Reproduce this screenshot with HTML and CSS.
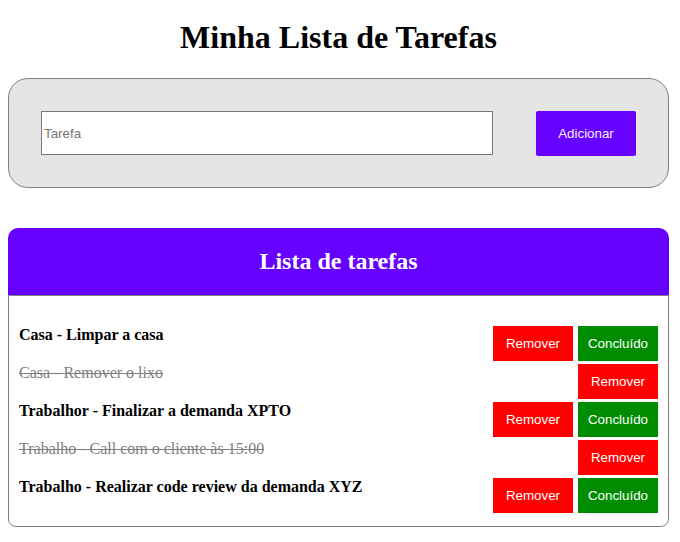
FILE: index.html
```html
<!DOCTYPE html>
<html lang="pt">
<head>
<meta charset="utf-8">
<title>Minha Lista de Tarefas</title>
<link rel="stylesheet" href="styles.css">
</head>
<body>
<main class="page">
  <h1 class="title">Minha Lista de Tarefas</h1>
  <form class="add-form">
    <input class="task-input" type="text" placeholder="Tarefa">
    <button class="add-btn" type="button">Adicionar</button>
  </form>
  <section class="list-card">
    <h2 class="list-header">Lista de tarefas</h2>
    <ul class="list-body">
      <li class="task">
        <span class="task-text">Casa - Limpar a casa</span>
        <div class="actions"><button class="btn btn-remove">Remover</button><button class="btn btn-done">Concluído</button></div>
      </li>
      <li class="task done">
        <span class="task-text">Casa - Remover o lixo</span>
        <div class="actions"><button class="btn btn-remove">Remover</button></div>
      </li>
      <li class="task">
        <span class="task-text">Trabalhor - Finalizar a demanda XPTO</span>
        <div class="actions"><button class="btn btn-remove">Remover</button><button class="btn btn-done">Concluído</button></div>
      </li>
      <li class="task done">
        <span class="task-text">Trabalho - Call com o cliente às 15:00</span>
        <div class="actions"><button class="btn btn-remove">Remover</button></div>
      </li>
      <li class="task">
        <span class="task-text">Trabalho - Realizar code review da demanda XYZ</span>
        <div class="actions"><button class="btn btn-remove">Remover</button><button class="btn btn-done">Concluído</button></div>
      </li>
    </ul>
  </section>
</main>
</body>
</html>
```
FILE: styles.css
```css
html, body {
  margin: 0;
  padding: 0;
  background: #ffffff;
}
body {
  font-family: "Liberation Serif", "Times New Roman", serif;
  color: #000;
}
.page {
  width: 661px;
  margin-left: 8px;
  padding-top: 1px;
}
.title {
  margin: 18px 0 0;
  height: 41px;
  font-size: 32px;
  font-weight: bold;
  text-align: center;
  line-height: 37px;
}
.add-form {
  margin-top: 18px;
  height: 110px;
  box-sizing: border-box;
  padding: 32px;
  border: 1px solid #808080;
  border-radius: 20px;
  background: #e5e5e5;
  display: flex;
  align-items: flex-start;
  gap: 43px;
}
.task-input {
  flex: 1;
  height: 44px;
  box-sizing: border-box;
  margin: 0;
  border: 1px solid #767676;
  padding: 0 2px;
  font-family: "Liberation Sans", Arial, sans-serif;
  font-size: 13.33px;
  background: #fff;
  outline: none;
}
.task-input::placeholder {
  color: #757575;
}
.add-btn {
  width: 100px;
  height: 45px;
  margin: 0;
  border: none;
  border-radius: 2px;
  background: #6600ff;
  color: #f4eeff;
  font-family: "Liberation Sans", Arial, sans-serif;
  font-size: 13.33px;
}
.list-card {
  margin-top: 40px;
}
.list-header {
  margin: 0;
  height: 67px;
  background: #6600ff;
  color: #fff;
  border-radius: 10px 10px 0 0;
  font-size: 24px;
  font-weight: bold;
  text-align: center;
  line-height: 66px;
}
.list-body {
  list-style: none;
  margin: 0;
  padding: 30px 10px 13px;
  border: 1px solid #808080;
  border-radius: 0 0 8px 8px;
  display: flex;
  flex-direction: column;
  gap: 3px;
}
.task {
  display: flex;
  justify-content: space-between;
  align-items: flex-start;
  height: 35px;
}
.task-text {
  font-size: 16px;
  font-weight: bold;
  line-height: 18px;
}
.done .task-text {
  font-weight: normal;
  color: #808080;
  text-decoration: line-through;
}
.actions {
  display: flex;
  gap: 5px;
}
.btn {
  width: 80px;
  height: 35px;
  margin: 0;
  border: none;
  color: #fff;
  font-family: "Liberation Sans", Arial, sans-serif;
  font-size: 13.33px;
  padding: 0;
}
.btn-remove {
  background: #ff0000;
}
.btn-done {
  background: #008c00;
}
```
